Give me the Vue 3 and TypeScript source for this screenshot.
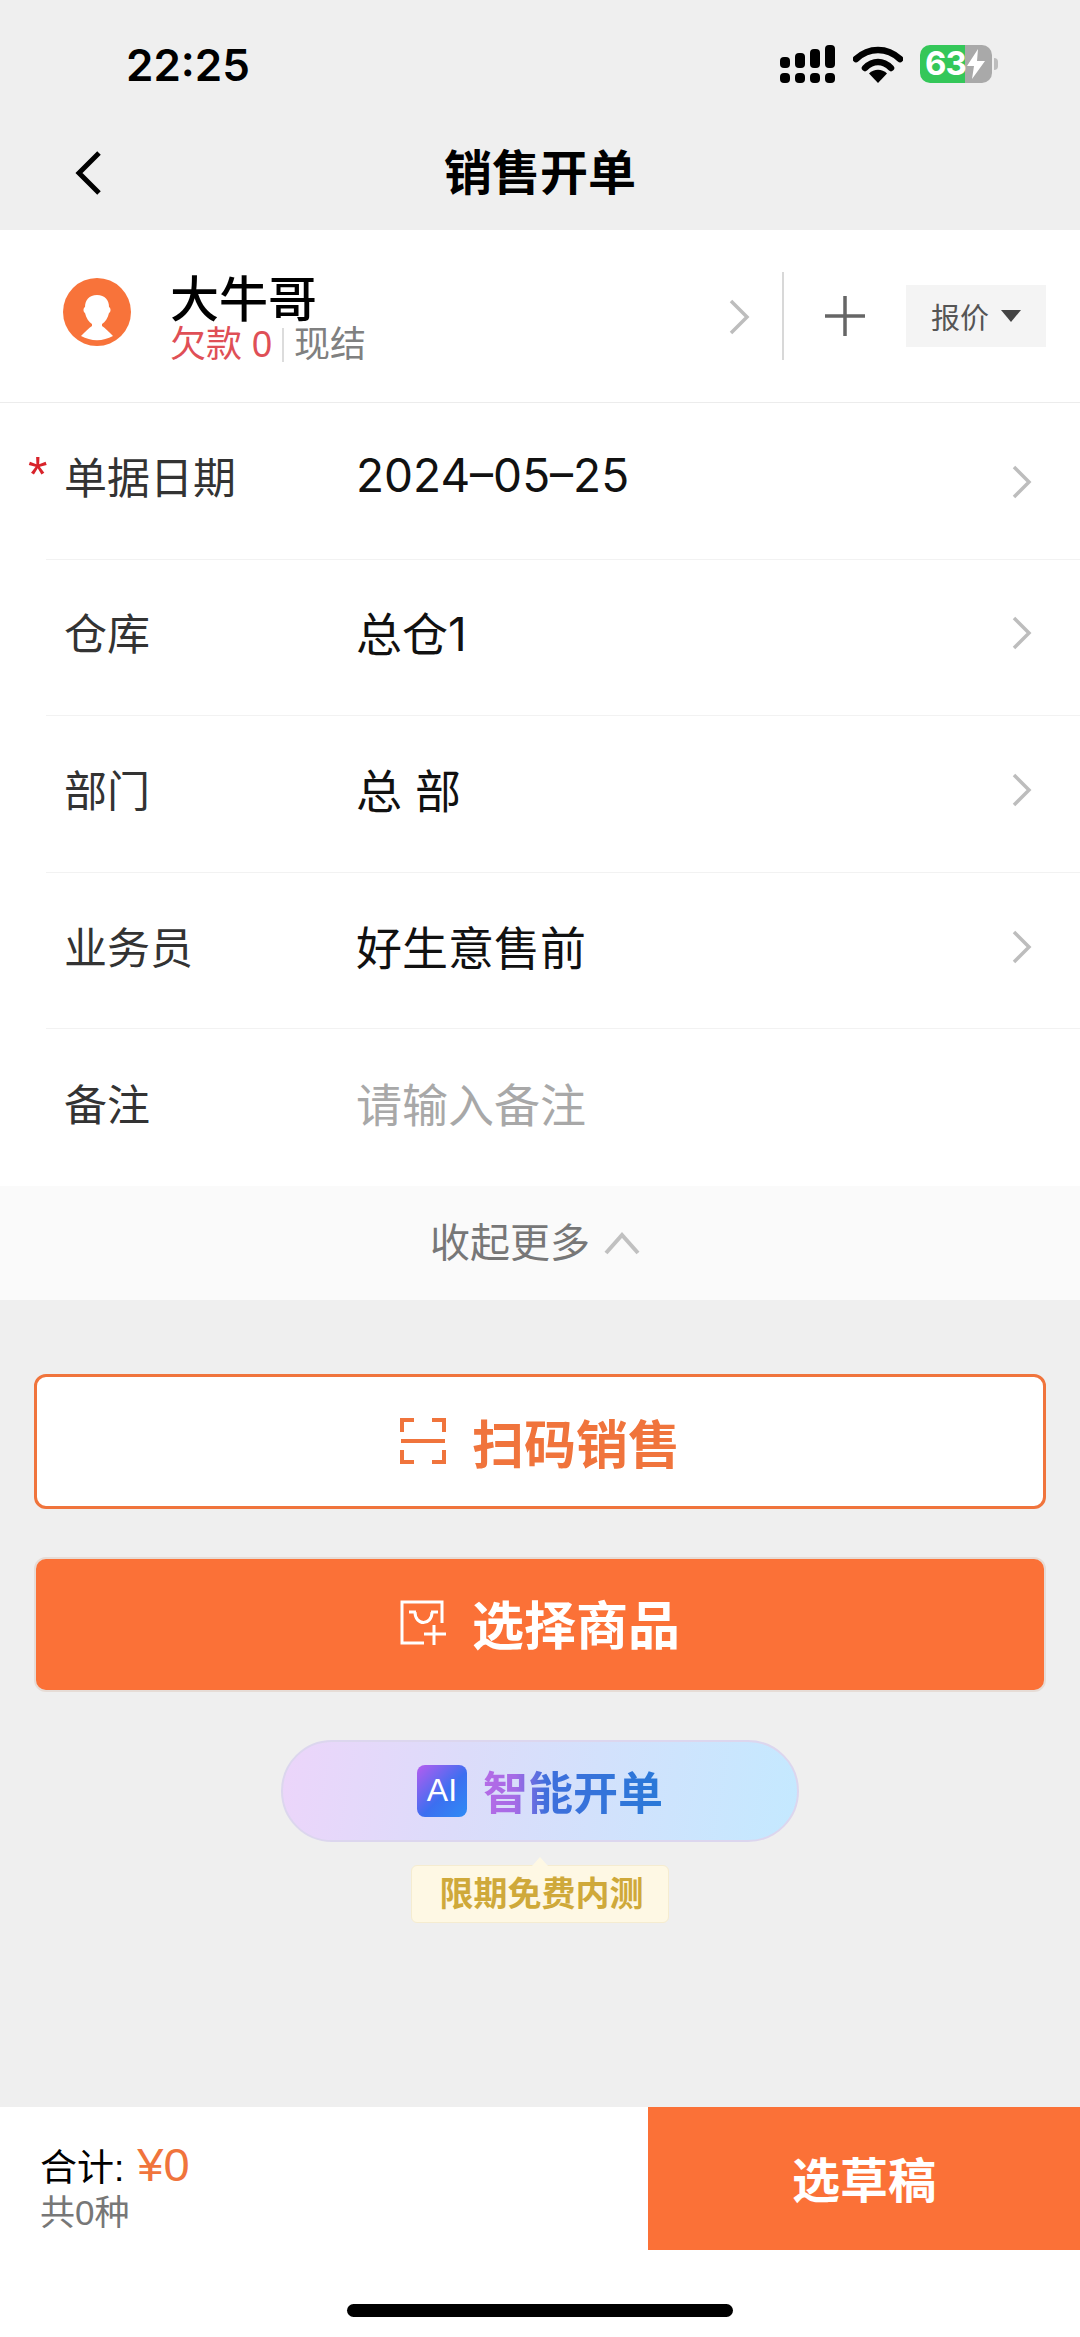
<script setup lang="ts">
interface FormRow {
  label: string;
  value: string;
  required?: boolean;
  placeholder?: boolean;
  arrow: boolean;
}

const rows: FormRow[] = [
  { label: "单据日期", value: "2024–05–25", required: true, arrow: true },
  { label: "仓库", value: "总仓1", arrow: true },
  { label: "部门", value: "总 部", arrow: true },
  { label: "业务员", value: "好生意售前", arrow: true },
  { label: "备注", value: "请输入备注", placeholder: true, arrow: false },
];
</script>

<template>
  <div class="page">
    <header class="top">
      <div class="status">
        <span class="time">22:25</span>
        <div class="status-icons">
          <svg class="signal" width="56" height="38" viewBox="0 0 56 38">
            <g fill="#000">
              <rect x="0" y="12" width="10" height="11" rx="4" />
              <rect x="15" y="8" width="10" height="15" rx="4" />
              <rect x="30" y="4" width="10" height="19" rx="4" />
              <rect x="45" y="0" width="10" height="23" rx="4" />
              <rect x="0" y="28" width="10" height="10" rx="4" />
              <rect x="15" y="28" width="10" height="10" rx="4" />
              <rect x="30" y="28" width="10" height="10" rx="4" />
              <rect x="45" y="28" width="10" height="10" rx="4" />
            </g>
          </svg>
          <svg class="wifi" width="50" height="38" viewBox="0 0 50 38">
            <path d="M3 14C16 2 34 2 47 14" fill="none" stroke="#000" stroke-width="6.5" stroke-linecap="round" />
            <path d="M12 23C20 15 30 15 38 23" fill="none" stroke="#000" stroke-width="6.5" stroke-linecap="round" />
            <path d="M16 28.5C21 23.5 29 23.5 34 28.5L25 38Z" fill="#000" />
          </svg>
          <div class="battery">
            <div class="battery-body">
              <span class="battery-num">63</span>
              <svg class="bolt" width="20" height="30" viewBox="0 0 20 30">
                <path d="M12 0 1 17h7l-2 13L19 12h-8z" fill="#fff" />
              </svg>
            </div>
            <span class="battery-cap"></span>
          </div>
        </div>
      </div>
      <div class="nav">
        <svg class="back" width="30" height="46" viewBox="0 0 30 46">
          <path d="M25 3 5 23l20 20" fill="none" stroke="#000" stroke-width="5" />
        </svg>
        <h1 class="title">销售开单</h1>
      </div>
    </header>

    <section class="customer">
      <svg class="avatar" width="68" height="68" viewBox="0 0 68 68">
        <circle cx="34" cy="34" r="34" fill="#f8733a" />
        <path d="M34 17c-8 0-12 5-12 12-2 1-2 5 0 6 1 5 4 9 7 11v2c-3 2-7 6-11 10a33 33 0 0 0 32 0c-4-4-8-8-11-10v-2c3-2 6-6 7-11 2-1 2-5 0-6 0-7-4-12-12-12z" fill="#fff" />
      </svg>
      <div class="customer-info">
        <div class="customer-name">大牛哥</div>
        <div class="customer-sub">
          <span class="debt">欠款 0</span>
          <span class="sub-line"></span>
          <span class="settle">现结</span>
        </div>
      </div>
      <svg class="cust-arrow" width="22" height="36" viewBox="0 0 22 36">
        <path d="M3 2 19 18 3 34" fill="none" stroke="#bdbdbd" stroke-width="3.5" />
      </svg>
      <span class="divider"></span>
      <svg class="plus" width="42" height="42" viewBox="0 0 42 42">
        <path d="M21 1v40M1 21h40" stroke="#666" stroke-width="3.5" />
      </svg>
      <div class="quote">
        <span>报价</span>
        <span class="caret"></span>
      </div>
    </section>

    <section class="form">
      <div v-for="row in rows" :key="row.label" class="row">
        <div class="label">
          <span v-if="row.required" class="star">*</span>{{ row.label }}
        </div>
        <div class="value" :class="{ placeholder: row.placeholder }">{{ row.value }}</div>
        <svg v-if="row.arrow" class="row-arrow" width="22" height="34" viewBox="0 0 22 34">
          <path d="M3 2 18 17 3 32" fill="none" stroke="#bdbdbd" stroke-width="3.5" />
        </svg>
      </div>
    </section>

    <div class="collapse">
      <span class="collapse-text">收起更多</span>
      <svg width="36" height="24" viewBox="0 0 36 24">
        <path d="M2 22 18 4l16 18" fill="none" stroke="#c0c0c0" stroke-width="4" />
      </svg>
    </div>

    <main class="actions">
      <button class="btn btn-outline" type="button">
        <svg width="46" height="46" viewBox="0 0 46 46">
          <path d="M14 2H2v12M32 2h12v12M14 44H2V32M32 44h12V32M1 23h44" fill="none" stroke="#f0743c" stroke-width="4" />
        </svg>
        <span>扫码销售</span>
      </button>
      <button class="btn btn-solid" type="button">
        <svg width="46" height="46" viewBox="0 0 46 46">
          <path d="M24 43H2V2h40v21" fill="none" stroke="#fff" stroke-width="3" />
          <path d="M15 12c0 14 17 14 17 0M9 12h7M31 12h7M34 25v20M24 34h22" fill="none" stroke="#fff" stroke-width="3" />
        </svg>
        <span>选择商品</span>
      </button>
      <div class="ai-wrap">
        <div class="ai-pill">
          <span class="ai-badge">AI</span>
          <span class="ai-text">智能开单</span>
        </div>
        <div class="ai-tip">限期免费内测</div>
      </div>
    </main>

    <footer class="bottom">
      <div class="bottom-bar">
        <div class="total">
          <div class="total-line">
            <span class="total-label">合计:</span>
            <span class="total-num">¥0</span>
          </div>
          <div class="total-count">共0种</div>
        </div>
        <button class="draft" type="button">选草稿</button>
      </div>
      <div class="home-wrap">
        <span class="home"></span>
      </div>
    </footer>
  </div>
</template>

<style scoped>
.page {
  display: flex;
  flex-direction: column;
  width: 1080px;
  height: 2337px;
  overflow: hidden;
  background: #efefef;
  font-family: "Liberation Sans", "Noto Sans CJK SC", sans-serif;
  color: #000;
}

.top {
  height: 230px;
  flex-shrink: 0;
}

.status {
  display: flex;
  align-items: center;
  justify-content: space-between;
  height: 130px;
  padding: 0 82px 0 126px;
}

.time {
  font-family: "Inter", "Liberation Sans", sans-serif;
  font-size: 44px;
  font-weight: 600;
}

.status-icons {
  display: flex;
  align-items: center;
  gap: 17px;
  margin-top: -3px;
}

.battery {
  display: flex;
  align-items: center;
  gap: 2px;
}

.battery-body {
  display: flex;
  align-items: center;
  width: 72px;
  height: 38px;
  padding-left: 5px;
  box-sizing: border-box;
  border-radius: 10px;
  background: linear-gradient(90deg, #34c759 0 63%, #a9a9a9 63% 100%);
}

.battery-num {
  font-family: "Inter", "Liberation Sans", sans-serif;
  font-size: 33px;
  font-weight: 700;
  line-height: 1;
  color: #fff;
  letter-spacing: -1px;
}

.battery-cap {
  width: 4px;
  height: 12px;
  border-radius: 0 4px 4px 0;
  background: #bdbdbd;
}

.nav {
  position: relative;
  display: flex;
  align-items: center;
  justify-content: center;
  height: 84px;
}

.back {
  position: absolute;
  left: 74px;
  top: 20px;
}

.title {
  margin: 0 0 6px;
  font-size: 48px;
  font-weight: 700;
}

.customer {
  display: flex;
  align-items: center;
  height: 173px;
  flex-shrink: 0;
  padding: 0 34px 0 63px;
  box-sizing: border-box;
  background: #fff;
  border-bottom: 1px solid #ececec;
}

.avatar {
  flex-shrink: 0;
  margin-bottom: 8px;
}

.customer-info {
  flex: 1;
  margin-left: 39px;
  margin-top: 3px;
}

.customer-name {
  font-size: 49px;
  font-weight: 500;
  line-height: 54px;
}

.customer-sub {
  display: flex;
  align-items: center;
  height: 36px;
  font-size: 36px;
  line-height: 36px;
}

.debt {
  color: #df4f56;
}

.sub-line {
  width: 2px;
  height: 34px;
  margin: 0 10px;
  background: #dcdcdc;
}

.settle {
  color: #808080;
}

.cust-arrow {
  margin-top: 2px;
}

.divider {
  width: 2px;
  height: 88px;
  margin-left: 32px;
  background: #d8d8d8;
}

.plus {
  margin-left: 40px;
}

.quote {
  display: flex;
  align-items: center;
  justify-content: center;
  gap: 12px;
  width: 140px;
  height: 62px;
  margin-left: 40px;
  background: #f4f4f4;
  font-size: 29px;
  color: #555;
}

.caret {
  width: 0;
  height: 0;
  border-left: 10px solid transparent;
  border-right: 10px solid transparent;
  border-top: 12px solid #444;
}

.form {
  flex-shrink: 0;
  background: #fff;
}

.row {
  display: flex;
  align-items: center;
  height: 156.6px;
  margin-left: 46px;
  padding-right: 47px;
  border-bottom: 1px solid #f2f2f2;
  box-sizing: border-box;
}

.row:last-child {
  border-bottom: none;
}

.label {
  position: relative;
  width: 310px;
  margin-bottom: 12px;
  padding-left: 18px;
  box-sizing: border-box;
  font-size: 43px;
  color: #333;
}

.star {
  position: absolute;
  left: -18px;
  top: 2px;
  font-size: 50px;
  color: #d8232a;
}

.value {
  flex: 1;
  margin-bottom: 12px;
  font-family: "Inter", "Noto Sans CJK SC", sans-serif;
  font-size: 46px;
  color: #111;
}

.value.placeholder {
  color: #a8a8a8;
}

.row-arrow {
  margin-bottom: 8px;
}

.row:first-child .row-arrow {
  margin-top: 2px;
  margin-bottom: 0;
}

.collapse {
  display: flex;
  align-items: center;
  justify-content: center;
  gap: 14px;
  height: 114px;
  padding-right: 10px;
  flex-shrink: 0;
  background: #fafafa;
  font-size: 40px;
  color: #777;
}

.collapse-text {
  margin-bottom: 6px;
}

.actions {
  flex: 1;
  padding: 74px 34px 0;
}

.btn {
  display: flex;
  align-items: center;
  justify-content: center;
  gap: 26px;
  width: 100%;
  height: 135px;
  border-radius: 12px;
  font-family: inherit;
  font-size: 52px;
  font-weight: 700;
  cursor: pointer;
}

.btn-outline {
  margin-bottom: 48px;
  background: #fff;
  border: 3px solid #f0743c;
  color: #f0743c;
}

.btn-solid {
  padding-bottom: 4px;
  background: #fb7137;
  border: 2px solid #e6dcd6;
  color: #fff;
}

.ai-wrap {
  display: flex;
  flex-direction: column;
  align-items: center;
  margin-top: 48px;
}

.ai-pill {
  display: flex;
  align-items: center;
  justify-content: center;
  gap: 16px;
  width: 518px;
  height: 102px;
  box-sizing: border-box;
  border: 2px solid #dcd6ee;
  border-radius: 51px;
  background: linear-gradient(100deg, #ecd5fa 0%, #dcdcfa 35%, #c4e9ff 100%);
}

.ai-badge {
  display: flex;
  align-items: center;
  justify-content: center;
  width: 50px;
  height: 52px;
  border-radius: 8px;
  background: linear-gradient(135deg, #b65cf0 0%, #3c6ff0 55%, #2f8cf5 100%);
  color: #fff;
  font-size: 32px;
  font-weight: 500;
}

.ai-text {
  background: linear-gradient(90deg, #b56be6 0%, #a56be6 18%, #3f6fdc 35%, #2979d8 100%);
  -webkit-background-clip: text;
  background-clip: text;
  color: transparent;
  font-size: 45px;
  font-weight: 700;
}

.ai-tip {
  position: relative;
  width: 258px;
  height: 58px;
  margin-top: 23px;
  padding-left: 3px;
  box-sizing: border-box;
  border: 1px solid #f5ecd0;
  border-radius: 6px;
  background: #fef8e4;
  color: #cfa93a;
  font-size: 34px;
  font-weight: 700;
  line-height: 56px;
  text-align: center;
}

.ai-tip::before {
  content: "";
  position: absolute;
  left: 50%;
  top: -9px;
  width: 0;
  height: 0;
  margin-left: -8px;
  border-left: 8px solid transparent;
  border-right: 8px solid transparent;
  border-bottom: 9px solid #fef8e4;
}

.bottom {
  flex-shrink: 0;
  height: 230px;
  background: #fff;
}

.bottom-bar {
  display: flex;
  height: 143px;
}

.total {
  flex: 1;
  padding: 34px 0 0 40px;
}

.total-line {
  display: flex;
  align-items: baseline;
  gap: 13px;
  line-height: 48px;
}

.total-label {
  font-size: 37px;
}

.total-num {
  font-size: 47px;
  color: #f0743c;
}

.total-count {
  font-size: 35px;
  line-height: 40px;
  color: #777;
}

.draft {
  width: 432px;
  height: 143px;
  padding: 0 0 4px;
  border: none;
  background: #fb7137;
  color: #fff;
  font-family: inherit;
  font-size: 48px;
  font-weight: 700;
  cursor: pointer;
}

.home-wrap {
  display: flex;
  justify-content: center;
  padding-top: 54px;
}

.home {
  width: 386px;
  height: 13px;
  border-radius: 7px;
  background: #000;
}
</style>

<style>
html,
body {
  margin: 0;
  background: #efefef;
}
</style>
